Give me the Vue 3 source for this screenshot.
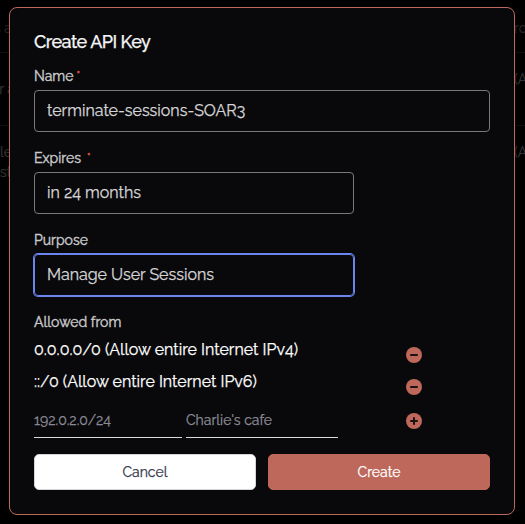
<template>
  <div class="page">
    <div class="backdrop" aria-hidden="true">
      <div class="line line-first"></div>
      <div class="line line-second"></div>
      <span class="ghost ghost-a">s a</span>
      <span class="ghost ghost-b">r a</span>
      <span class="ghost ghost-c">ole</span>
      <span class="ghost ghost-g">st</span>
      <span class="ghost ghost-d">ro</span>
      <span class="ghost ghost-e">(A</span>
      <span class="ghost ghost-f">(A</span>
    </div>

    <form class="dialog" @submit.prevent>
      <h2 class="title">Create API Key</h2>

      <div v-for="field in fields" :key="field.id" class="field" :class="field.id">
        <label class="label" :for="field.id">
          <span>{{ field.label }}</span>
          <span v-if="field.required" class="required">*</span>
        </label>
        <div :id="field.id" class="control" :class="{ wide: field.wide, focused: field.focused }">
          {{ field.value }}
        </div>
      </div>

      <div class="label allowed-label">Allowed from</div>
      <div v-for="range in ranges" :key="range.cidr" class="range">
        <span class="range-text">{{ range.cidr }} ({{ range.comment }})</span>
        <button class="icon-button" type="button">
          <svg width="16" height="16" viewBox="0 0 16 16">
            <circle cx="8" cy="8" r="8" fill="#bd685a" />
            <path d="M4.2 8h7.6" stroke="#1d1213" stroke-width="2" />
          </svg>
        </button>
      </div>

      <div class="new-range">
        <div class="underlined cidr">192.0.2.0/24</div>
        <div class="underlined comment">Charlie's cafe</div>
        <button class="icon-button" type="button">
          <svg width="16" height="16" viewBox="0 0 16 16">
            <circle cx="8" cy="8" r="8" fill="#bd685a" />
            <path d="M4.2 8h7.6M8 4.2v7.6" stroke="#1d1213" stroke-width="2" />
          </svg>
        </button>
      </div>

      <div class="actions">
        <button class="button cancel" type="button">Cancel</button>
        <button class="button create" type="submit">Create</button>
      </div>
    </form>
  </div>
</template>

<script setup>
import { ref } from 'vue';

const fields = ref([
  { id: 'name', label: 'Name', value: 'terminate-sessions-SOAR3', required: true, wide: true },
  { id: 'expires', label: 'Expires', value: 'in 24 months', required: true },
  { id: 'purpose', label: 'Purpose', value: 'Manage User Sessions', focused: true },
]);

const ranges = ref([
  { cidr: '0.0.0.0/0', comment: 'Allow entire Internet IPv4' },
  { cidr: '::/0', comment: 'Allow entire Internet IPv6' },
]);
</script>

<style>
body {
  background: #000;
}
</style>

<style scoped>
.page {
  position: relative;
  box-sizing: border-box;
  width: 525px;
  height: 524px;
  padding: 7px 9px 8px;
  overflow: hidden;
  background: #000;
  font-family: Raleway, Lato, sans-serif;
  -webkit-text-stroke: 0.25px;
}

/* Dimmed page content behind the dialog */
.backdrop {
  position: absolute;
  inset: 0;
  color: #333;
  font-size: 14px;
  line-height: 20px;
}

.line {
  position: absolute;
  left: 0;
  right: 0;
  height: 1px;
  background: #0e0e0f;
}

.line-first { top: 52px; }
.line-second { top: 125px; }

.ghost {
  position: absolute;
  white-space: nowrap;
}

.ghost-a { right: 513px; top: 18px; color: #262626; }
.ghost-b { right: 510px; top: 79px; }
.ghost-c { right: 513px; top: 142px; }
.ghost-g { left: 0; top: 162px; }
.ghost-d { left: 514px; top: 18px; color: #262626; }
.ghost-e { left: 514px; top: 69px; }
.ghost-f { left: 514px; top: 142px; }

.dialog {
  position: relative;
  box-sizing: border-box;
  width: 506px;
  height: 508px;
  padding: 22px 24px 24px;
  border: 1px solid #bd685a;
  border-radius: 8px;
  background: #09090b;
}

.title {
  margin: 0 0 10px;
  color: #f4f4f5;
  font-size: 18px;
  font-weight: 500;
  line-height: 24px;
  letter-spacing: -0.55px;
}

.field {
  margin-bottom: 14px;
}

.label {
  display: flex;
  height: 26px;
  color: #c9c9cb;
  font-size: 14px;
  line-height: 24px;
  white-space: nowrap;
  -webkit-text-stroke: 0.4px;
}

.required {
  margin-left: 3px;
  color: #d9533c;
  font-size: 11px;
  line-height: 23px;
}

.expires .required {
  margin-left: 6px;
}

.control {
  box-sizing: border-box;
  width: 320px;
  height: 42px;
  padding: 0 12px;
  border: 1px solid #79797c;
  border-radius: 4px;
  color: #d5d5d7;
  font-size: 16px;
  line-height: 39px;
  white-space: nowrap;
}

.control.wide {
  width: 456px;
}

.control.focused {
  border-color: #6c85ee;
  box-shadow: 0 0 0 1px #6c85ee;
}

.allowed-label {
  height: 29px;
}

.range {
  display: flex;
  align-items: center;
  height: 32px;
  color: #fff;
  font-size: 16px;
}

.range-text {
  width: 372px;
  margin-top: -10px;
  line-height: 24px;
  white-space: nowrap;
}

.icon-button {
  width: 16px;
  height: 16px;
  padding: 0;
  border: 0;
  background: none;
}

.icon-button svg {
  display: block;
}

.new-range {
  display: flex;
  gap: 4px;
  height: 35px;
}

.underlined {
  box-sizing: border-box;
  height: 35px;
  border-bottom: 1px solid #dddbd6;
  color: #8b8b97;
  font-size: 14px;
  line-height: 35px;
  white-space: nowrap;
}

.cidr { width: 148px; }
.comment { width: 152px; }

.new-range .icon-button {
  margin: 10px 0 0 64px;
}

.actions {
  display: flex;
  gap: 12px;
  margin-top: 16px;
}

.button {
  flex: 1;
  box-sizing: border-box;
  height: 36px;
  padding: 0;
  border: 1px solid #bd685a;
  border-radius: 5px;
  background: #bd685a;
  color: #fff;
  font-family: inherit;
  font-size: 14px;
  line-height: 34px;
}

.cancel {
  border-color: #d4d4da;
  background: #fff;
  color: #35384a;
}
</style>
